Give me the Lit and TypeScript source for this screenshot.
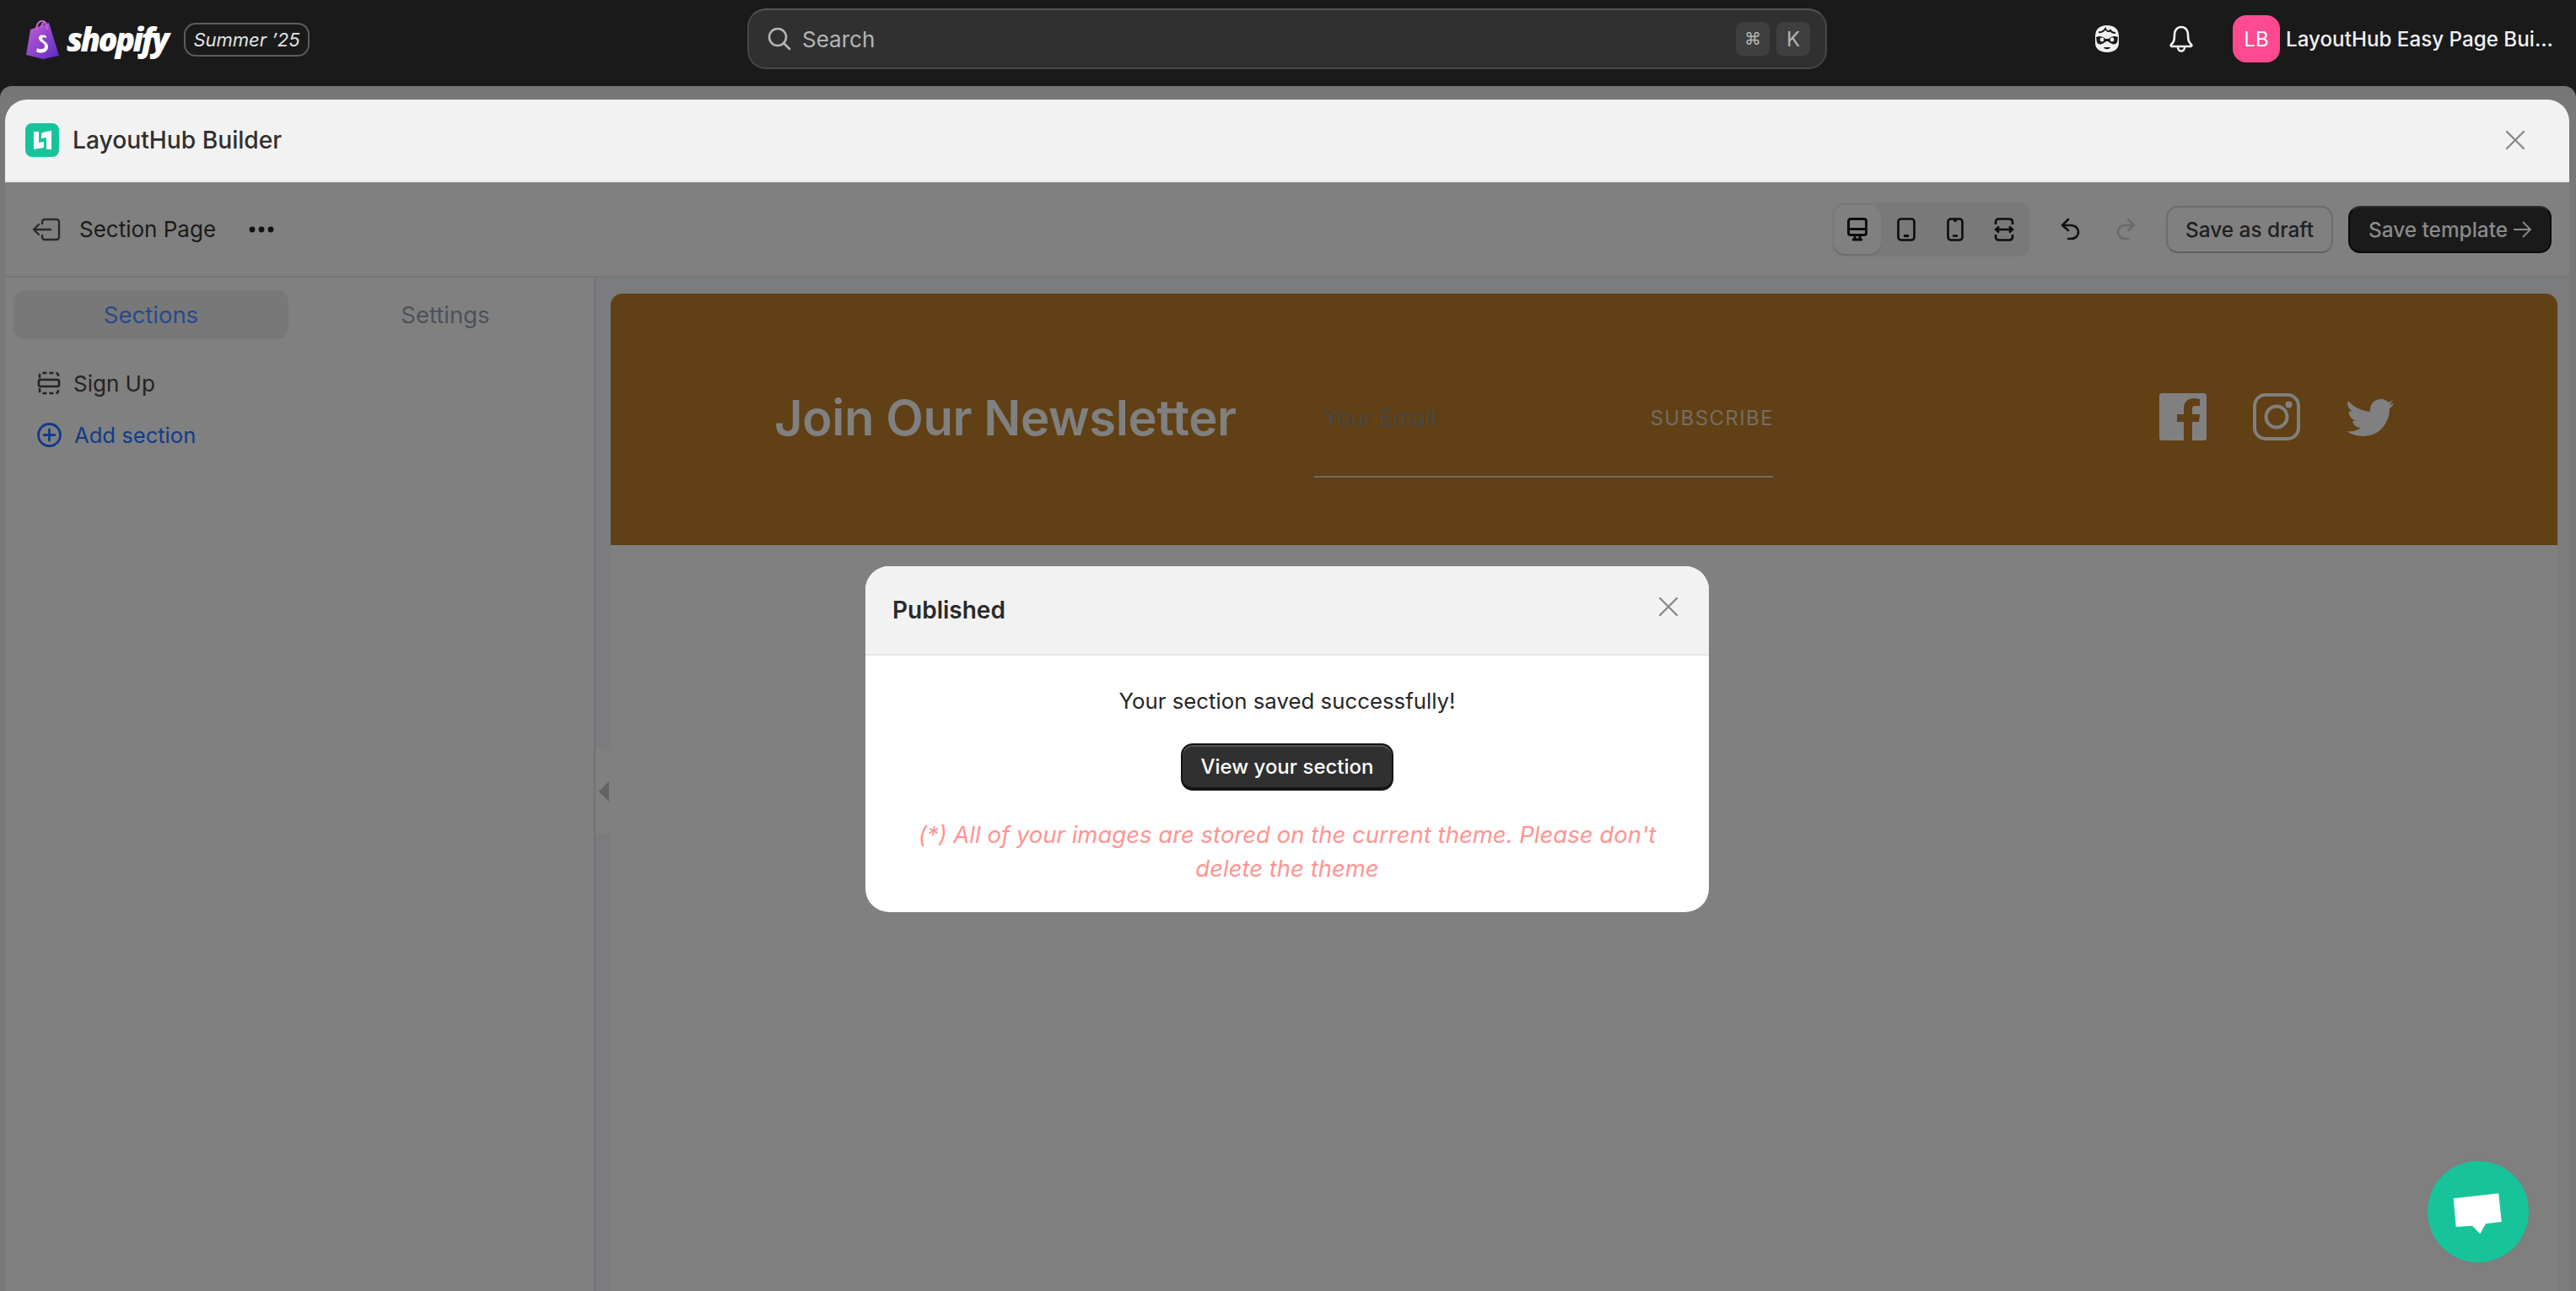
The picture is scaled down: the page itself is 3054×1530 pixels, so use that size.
import { LitElement, html, css, svg } from "lit";
import { customElement } from "lit/decorators.js";

const ico = (w: number, h: number, vb: string, body: unknown, cls = "") =>
  html`<svg class=${cls} width=${w} height=${h} viewBox=${vb} fill="none" aria-hidden="true">${body}</svg>`;

const closeX = (stroke: string) =>
  ico(24, 24, "0 0 24 24", svg`<path d="M2 2 22 22M22 2 2 22" stroke=${stroke} stroke-width="2.4" stroke-linecap="round"/>`);

@customElement("app-root")
export class AppRoot extends LitElement {
  static styles = css`
    :host {
      display: block;
      position: relative;
      width: 3054px;
      height: 1530px;
      overflow: hidden;
      background: #1a1a1a;
      font-family: Inter, "Liberation Sans", sans-serif;
      font-size: 26px;
      color: #1c1c1c;
    }
    .page { display: flex; flex-direction: column; height: 1530px; }

    /* Top bar */
    .topbar {
      flex: none;
      height: 102px;
      display: grid;
      grid-template-columns: 886px 1280px 1fr;
      align-items: center;
      background: #1a1a1a;
    }
    .brand { display: flex; align-items: center; padding-left: 31px; margin-top: -8px; }
    .wordmark {
      font-family: "Open Sans", sans-serif;
      font-weight: 800;
      font-style: italic;
      font-size: 38px;
      letter-spacing: -2.6px;
      color: #fff;
      margin-left: 8px;
      line-height: 46px;
      width: 125px;
      margin-top: -2px;
      white-space: nowrap;
    }
    .season {
      margin-left: 14px;
      width: 149px;
      height: 40px;
      box-sizing: border-box;
      border: 2px solid #5c5c5c;
      border-radius: 14px;
      font-style: italic;
      font-size: 22px;
      color: #e3e3e3;
      display: flex;
      align-items: center;
      justify-content: center;
      white-space: nowrap;
    }
    .search {
      height: 72px;
      box-sizing: border-box;
      background: #303030;
      border: 2px solid #464646;
      border-top-color: #555;
      border-radius: 22px;
      display: flex;
      align-items: center;
      padding: 0 18px 0 22px;
      color: #b5b5b5;
      margin-top: -10px;
    }
    .search .label { margin-left: 13px; flex: 1; }
    .kbd {
      width: 40px;
      height: 40px;
      margin-left: 8px;
      border-radius: 8px;
      background: #3f3f3f;
      color: #b5b5b5;
      font-size: 24px;
      display: flex;
      align-items: center;
      justify-content: center;
    }
    .kbd.sym { font-family: "DejaVu Sans", sans-serif; font-size: 20px; }
    .account { display: flex; align-items: center; padding-left: 317px; margin-top: -10px; }
    .account .bell { margin-left: 58px; }
    .avatar {
      margin-left: 46px;
      width: 56px;
      height: 56px;
      border-radius: 16px;
      background: #ff4a91;
      color: #fff;
      font-size: 24px;
      display: flex;
      align-items: center;
      justify-content: center;
    }
    .name {
      margin-left: 7px;
      color: #f0f0f0;
      font-weight: 450;
      font-size: 24.2px;
      white-space: nowrap;
    }

    /* Frame */
    .frame {
      flex: 1;
      min-height: 0;
      padding: 16px 8px 0 6px;
      background: linear-gradient(#757575, #787878 16px);
      border-radius: 14px 14px 0 0;
      display: flex;
    }
    .panel {
      flex: 1;
      min-width: 0;
      display: flex;
      flex-direction: column;
      background: #808080;
      border-radius: 26px 26px 0 0;
      overflow: hidden;
    }
    .panel-head {
      flex: none;
      height: 98px;
      box-sizing: border-box;
      background: #f2f2f2;
      border-bottom: 2px solid #ebebeb;
      display: flex;
      align-items: center;
      padding: 0 52px 0 24px;
      font-size: 28.2px;
      font-weight: 500;
      color: #303030;
    }
    .panel-head .title { margin-left: 16px; flex: 1; }

    .toolbar {
      flex: none;
      height: 113px;
      box-sizing: border-box;
      border-bottom: 2px solid #767676;
      display: flex;
      align-items: center;
      padding: 0 21px 0 32px;
    }
    .toolbar .page-name { margin-left: 22px; color: #1a1a1a; }
    .toolbar .dots { margin-left: 39px; flex: 1; display: flex; }
    .devices {
      width: 235px;
      height: 64px;
      box-sizing: border-box;
      padding: 3px 2px;
      border-radius: 14px;
      background: #797979;
      display: flex;
      align-items: stretch;
      gap: 2px;
    }
    .device {
      width: 56px;
      border-radius: 14px;
      display: flex;
      align-items: center;
      justify-content: center;
    }
    .device.on { background: #808080; box-shadow: 0 2px 1px #6e6e6e; }
    .history { display: flex; align-items: center; margin-left: 36px; gap: 41px; }
    .btn {
      height: 56px;
      box-sizing: border-box;
      border-radius: 14px;
      display: flex;
      align-items: center;
      justify-content: center;
      font-size: 24.4px;
      font-weight: 450;
      white-space: nowrap;
    }
    .btn.draft {
      margin-left: 36px;
      width: 198px;
      border: 2px solid #6c6c6c;
      border-bottom-color: #5f5f5f;
      color: #1f1f1f;
    }
    .btn.save {
      margin-left: 18px;
      width: 241px;
      background: #1a1a1a;
      border: 2px solid #0a0a0a;
      border-top-color: #2a2a2a;
      color: #8a8a8a;
      gap: 6px;
    }

    .body { flex: 1; min-height: 0; display: flex; position: relative; }
    .sidebar {
      flex: none;
      width: 698px;
      box-sizing: border-box;
      padding: 15px 10px;
      background: #808080;
    }
    .tabs { display: grid; grid-template-columns: 326px 1fr; }
    .tab {
      height: 58px;
      border-radius: 14px;
      display: flex;
      align-items: center;
      justify-content: center;
      font-size: 27.5px;
      color: #4c5259;
    }
    .tab.on { background: #787878; color: #274a8a; }
    .tab.second { margin-left: 20px; }
    .rows { margin-top: 37px; padding-left: 28px; display: flex; flex-direction: column; gap: 31px; }
    .row { display: flex; align-items: center; height: 30px; color: #232323; }
    .row span { margin-left: 15px; }
    .row.add { color: #123a8a; font-size: 25.6px; }
    .row.add span { margin-left: 15px; }

    .canvas {
      flex: 1;
      min-width: 0;
      border-left: 2px solid #737377;
      background: #7a7c7e;
      padding: 19px 14px 0 18px;
      display: flex;
    }
    .sheet { flex: 1; background: #808080; border-radius: 14px 14px 0 0; overflow: hidden; }
    .banner {
      height: 298px;
      background: #604014;
      display: grid;
      grid-template-columns: 194px 640px 544px 1fr;
      position: relative;
    }
    .headline {
      grid-column: 2;
      margin-top: 112px;
      height: 70px;
      font-weight: 600;
      font-size: 58px;
      line-height: 70px;
      letter-spacing: -0.4px;
      color: #808080;
      white-space: nowrap;
    }
    .signup {
      grid-column: 3;
      height: 218px;
      box-sizing: border-box;
      border-bottom: 2px solid #6e6a66;
      display: flex;
      justify-content: space-between;
      align-items: flex-start;
      padding: 134px 0 0 11px;
      font-size: 27px;
    }
    .signup .placeholder { color: #474845; line-height: 28px; }
    .signup .cta { color: #756d63; letter-spacing: 1.4px; margin-right: -1px; line-height: 28px; font-size: 24px; }
    .social { grid-column: 4; display: flex; gap: 55px; padding: 118px 0 0 458px; align-items: flex-start; }
    .social .bird { margin-top: 5px; }

    .handle {
      position: absolute;
      left: 700px;
      top: 559px;
      width: 18px;
      height: 100px;
      background: #808080;
      display: flex;
      align-items: center;
      padding-left: 4px;
      box-sizing: border-box;
    }

    /* Dialog */
    .overlay {
      position: absolute;
      left: 1026px;
      top: 671px;
      width: 1000px;
      height: 410px;
      border-radius: 28px;
      overflow: hidden;
      background: #fff;
      display: flex;
      flex-direction: column;
    }
    .dlg-head {
      flex: none;
      height: 106px;
      box-sizing: border-box;
      background: #f2f2f2;
      border-bottom: 2px solid #e6e6e6;
      display: flex;
      justify-content: space-between;
      padding: 36px 36px 0 32px;
      font-size: 28px;
      font-weight: 600;
      color: #2a2a2a;
      line-height: 32px;
    }
    .dlg-body { display: flex; flex-direction: column; align-items: center; text-align: center; }
    .dlg-msg { margin-top: 38px; line-height: 32px; color: #262626; font-size: 25.8px; }
    .dlg-btn {
      margin-top: 34px;
      width: 252px;
      height: 56px;
      box-sizing: border-box;
      border-radius: 14px;
      background: #303030;
      border: 2px solid #151515;
      border-bottom-width: 4px;
      box-shadow: inset 0 2px 0 #555;
      color: #fff;
      font-size: 24px;
      font-weight: 450;
      display: flex;
      align-items: center;
      justify-content: center;
    }
    .dlg-note {
      margin-top: 32px;
      width: 900px;
      font-style: italic;
      font-size: 27.5px;
      line-height: 40px;
      color: #ff9492;
    }

    .chat {
      position: absolute;
      left: 2878px;
      top: 1376px;
      width: 120px;
      height: 120px;
      border-radius: 50%;
      background: #17c49a;
      box-shadow: 0 0 16px rgba(0, 0, 0, 0.04);
    }
    .chat svg { display: block; }
  `;

  render() {
    const black = "#0c0c0c";
    return html`
      <div class="page">
        <header class="topbar">
          <div class="brand">
            ${ico(40, 46, "0 0 40 46", svg`
              <defs><linearGradient id="bag" x1="0" y1="0" x2="1" y2="1"><stop offset="0" stop-color="#c45fd6"/><stop offset="1" stop-color="#5a2bc4"/></linearGradient></defs>
              <path d="M5 11 27 3 39 42 20 46 0 41Z" fill="url(#bag)"/>
              <path d="M12 12C12 4 16 0 20 1c4 1 5 6 5 10M18 9c0-4 2-7 5-6" stroke="#c45fd6" stroke-width="2.2"/>
              <path d="M24 19c-5-3-10-1-9 3 1 4 7 4 7 9 0 4-6 4-9 2l-1 4c5 3 14 2 14-6 0-5-6-6-7-9 0-2 3-2 5-1Z" fill="#fff"/>`)}
            <div class="wordmark">shopify</div>
            <div class="season">Summer ’25</div>
          </div>
          <div class="search">
            ${ico(28, 28, "0 0 28 28", svg`<circle cx="12" cy="12" r="10" stroke="#b5b5b5" stroke-width="2.6"/><path d="m19 19 7 7" stroke="#b5b5b5" stroke-width="2.6" stroke-linecap="round"/>`)}
            <span class="label">Search</span>
            <span class="kbd sym">⌘</span><span class="kbd">K</span>
          </div>
          <div class="account">
            ${ico(30, 34, "0 0 30 34", svg`
              <path d="M15 1C6 1 1 6 1 14v8c0 7 6 11 14 11s14-4 14-11v-8C29 6 24 1 15 1Z" fill="#f1f1f1"/>
              <path d="M5 9c4 1 6-1 8-4 1 3 4 4 6 2 1 2 3 3 6 3" stroke="#1a1a1a" stroke-width="2"/>
              <path d="M2 15c4-2 8-1 11 2h4c3-3 7-4 11-2l-1 6c-1 3-6 3-8 1l-3-2h-2l-3 2c-2 2-7 2-8-1Z" fill="#1a1a1a"/>
              <circle cx="9" cy="18" r="2.4" fill="#f1f1f1"/><circle cx="21" cy="18" r="2.4" fill="#f1f1f1"/>
              <path d="M11 27h8c-1 3-7 3-8 0Z" fill="#1a1a1a"/>`)}
            ${ico(30, 32, "0 0 30 32", svg`
              <path d="M15 2c-5 0-8 4-8 9 0 7-1 9-4 12-1 1 0 2 1 2h22c1 0 2-1 1-2-3-3-4-5-4-12 0-5-3-9-8-9Z" stroke="#f1f1f1" stroke-width="2.6"/>
              <path d="M11 26c0 6 8 6 8 0" stroke="#f1f1f1" stroke-width="2.6"/>`, "bell")}
            <div class="avatar">LB</div>
            <div class="name">LayoutHub Easy Page Bui...</div>
          </div>
        </header>

        <div class="frame">
          <div class="panel">
            <div class="panel-head">
              ${ico(40, 40, "0 0 40 40", svg`
                <rect width="40" height="40" rx="8" fill="#17c49a"/>
                <path d="M10 10h6v13l6-1v7l-12 2ZM24 10l7-1v22h-6V17l-6 1v-6Z" fill="#fff"/>`)}
              <span class="title">LayoutHub Builder</span>
              ${closeX("#8a8a8a")}
            </div>

            <div class="toolbar">
              ${ico(34, 28, "0 0 34 28", svg`
                <path d="M12 7V5a3 3 0 0 1 3-3h14a3 3 0 0 1 3 3v18a3 3 0 0 1-3 3H15a3 3 0 0 1-3-3v-2" stroke="#2a2a2a" stroke-width="2.4" stroke-linecap="round"/>
                <path d="M22 14H2m6-6-6 6 6 6" stroke="#2a2a2a" stroke-width="2.4" stroke-linecap="round" stroke-linejoin="round"/>`)}
              <span class="page-name">Section Page</span>
              <div class="dots">
                ${ico(30, 8, "0 0 30 8", svg`<circle cx="4" cy="4" r="3.4" fill="#111"/><circle cx="15" cy="4" r="3.4" fill="#111"/><circle cx="26" cy="4" r="3.4" fill="#111"/>`)}
              </div>
              <div class="devices">
                <div class="device on">
                  ${ico(24, 28, "0 0 24 28", svg`
                    <path d="M4 1.5h16A2.5 2.5 0 0 1 22.500 4v14a2.500 2.500 0 0 1-2.500 2.500H4A2.500 2.500 0 0 1 1.500 18V4A2.500 2.500 0 0 1 4 1.500Z" stroke=${black} stroke-width="3"/>
                    <path d="M2 13.500h20" stroke=${black} stroke-width="3"/><path d="M9 20v5M15 20v5M6 26h12" stroke=${black} stroke-width="3"/>`)}
                </div>
                <div class="device">
                  ${ico(22, 28, "0 0 22 28", svg`<rect x="1.500" y="1.500" width="19" height="25" rx="3.500" stroke=${black} stroke-width="2.600"/><path d="M8 21.500h6" stroke=${black} stroke-width="3"/>`)}
                </div>
                <div class="device">
                  ${ico(20, 28, "0 0 20 28", svg`<rect x="1.500" y="1.500" width="17" height="25" rx="3.500" stroke=${black} stroke-width="2.600"/><path d="M7 21.500h6M8 3.500h4" stroke=${black} stroke-width="2.600"/>`)}
                </div>
                <div class="device">
                  ${ico(24, 28, "0 0 24 28", svg`
                    <path d="M2 8V5a3.500 3.500 0 0 1 3.500-3.500h13A3.500 3.500 0 0 1 22 5v3M2 20v3a3.500 3.500 0 0 0 3.500 3.500h13A3.500 3.500 0 0 0 22 23v-3" stroke=${black} stroke-width="2.600"/>
                    <path d="M2 14h20M6 10.500 2 14l4 3.500M18 10.500 22 14l-4 3.500" stroke=${black} stroke-width="2.400"/>`)}
                </div>
              </div>
              <div class="history">
                ${ico(24, 28, "0 0 24 28", svg`<path d="M9 2 2 9l7 6" stroke="#111" stroke-width="2.600" stroke-linecap="round" stroke-linejoin="round"/><path d="M3 9h9c6 0 9 4 9 8s-3 8-9 8H9" stroke="#111" stroke-width="2.600" stroke-linecap="round"/>`)}
                ${ico(24, 28, "0 0 24 28", svg`<path d="m15 2 7 7-7 6" stroke="#6a6a6a" stroke-width="2.600" stroke-linecap="round" stroke-linejoin="round"/><path d="M21 9h-9c-6 0-9 4-9 8s3 8 9 8h3" stroke="#6a6a6a" stroke-width="2.600" stroke-linecap="round"/>`)}
              </div>
              <div class="btn draft">Save as draft</div>
              <div class="btn save">
                <span>Save template</span>
                ${ico(22, 22, "0 0 22 22", svg`<path d="M1 11h20M12 2l9 9-9 9" stroke="#8a8a8a" stroke-width="1.800"/>`)}
              </div>
            </div>

            <div class="body">
              <aside class="sidebar">
                <div class="tabs">
                  <div class="tab on">Sections</div>
                  <div class="tab second">Settings</div>
                </div>
                <div class="rows">
                  <div class="row">
                    ${ico(28, 28, "0 0 28 28", svg`
                      <path d="M3 8V5a3 3 0 0 1 3-3h16a3 3 0 0 1 3 3v3M3 20v3a3 3 0 0 0 3 3h16a3 3 0 0 0 3-3v-3" stroke="#232323" stroke-width="2.600" stroke-dasharray="5 3"/>
                      <rect x="2" y="10" width="24" height="8" rx="2" stroke="#232323" stroke-width="2.600"/>`)}
                    <span>Sign Up</span>
                  </div>
                  <div class="row add">
                    ${ico(29, 29, "0 0 29 29", svg`<circle cx="14.500" cy="14.500" r="13" stroke="#123a8a" stroke-width="2.800"/><path d="M14.500 8v13M8 14.500h13" stroke="#123a8a" stroke-width="2.800" stroke-linecap="round"/>`)}
                    <span>Add section</span>
                  </div>
                </div>
              </aside>
              <main class="canvas">
                <div class="sheet">
                  <section class="banner">
                    <div class="headline">Join Our Newsletter</div>
                    <div class="signup">
                      <span class="placeholder">Your Email</span>
                      <span class="cta">SUBSCRIBE</span>
                    </div>
                    <div class="social">
                      ${ico(56, 56, "0 0 56 56", svg`
                        <path d="M3 0h50a3 3 0 0 1 3 3v50a3 3 0 0 1-3 3H39V34h8l1-9h-9v-6c0-3 1-4 4-4h5V7c-2 0-4-1-7-1-7 0-12 4-12 12v7h-8v9h8v22H3a3 3 0 0 1-3-3V3a3 3 0 0 1 3-3Z" fill="#808080"/>`)}
                      ${ico(56, 56, "0 0 56 56", svg`
                        <rect x="2" y="2" width="52" height="52" rx="13" stroke="#808080" stroke-width="4"/>
                        <circle cx="28" cy="28" r="12.500" stroke="#808080" stroke-width="4"/>
                        <circle cx="42.500" cy="13.500" r="4" fill="#808080"/>`)}
                      ${ico(56, 48, "0 0 56 48", svg`
                        <path d="M2 4c7 8 15 12 26 13-1-9 5-15 13-15 4 0 7 2 9 4l5-3-4 6 5-2c-1 3-3 4-5 6 0 17-12 33-31 33-7 0-14-2-20-6 7 1 12-1 17-4-6 0-9-4-10-8h4C5 26 2 20 3 16l4 1C2 13 0 9 2 4Z" fill="#808080"/>`, "bird")}
                    </div>
                  </section>
                </div>
              </main>
              <div class="handle">
                ${ico(12, 24, "0 0 12 24", svg`<path d="M12 0v24L0 12Z" fill="#636363"/>`)}
              </div>
            </div>
          </div>
        </div>
      </div>

      <div class="overlay" role="dialog">
        <div class="dlg-head">
          <span>Published</span>
          ${closeX("#8a8a8a")}
        </div>
        <div class="dlg-body">
          <div class="dlg-msg">Your section saved successfully!</div>
          <div class="dlg-btn">View your section</div>
          <div class="dlg-note">(*) All of your images are stored on the current theme. Please don't delete the theme</div>
        </div>
      </div>

      <div class="chat">
        ${ico(120, 120, "0 0 120 120", svg`<path d="M30.700 44.300 84.300 38.300 87.700 72 69 74.300 62.300 86.300 53 76.700 33.700 78Z" fill="#fff"/>`)}
      </div>
    `;
  }
}
